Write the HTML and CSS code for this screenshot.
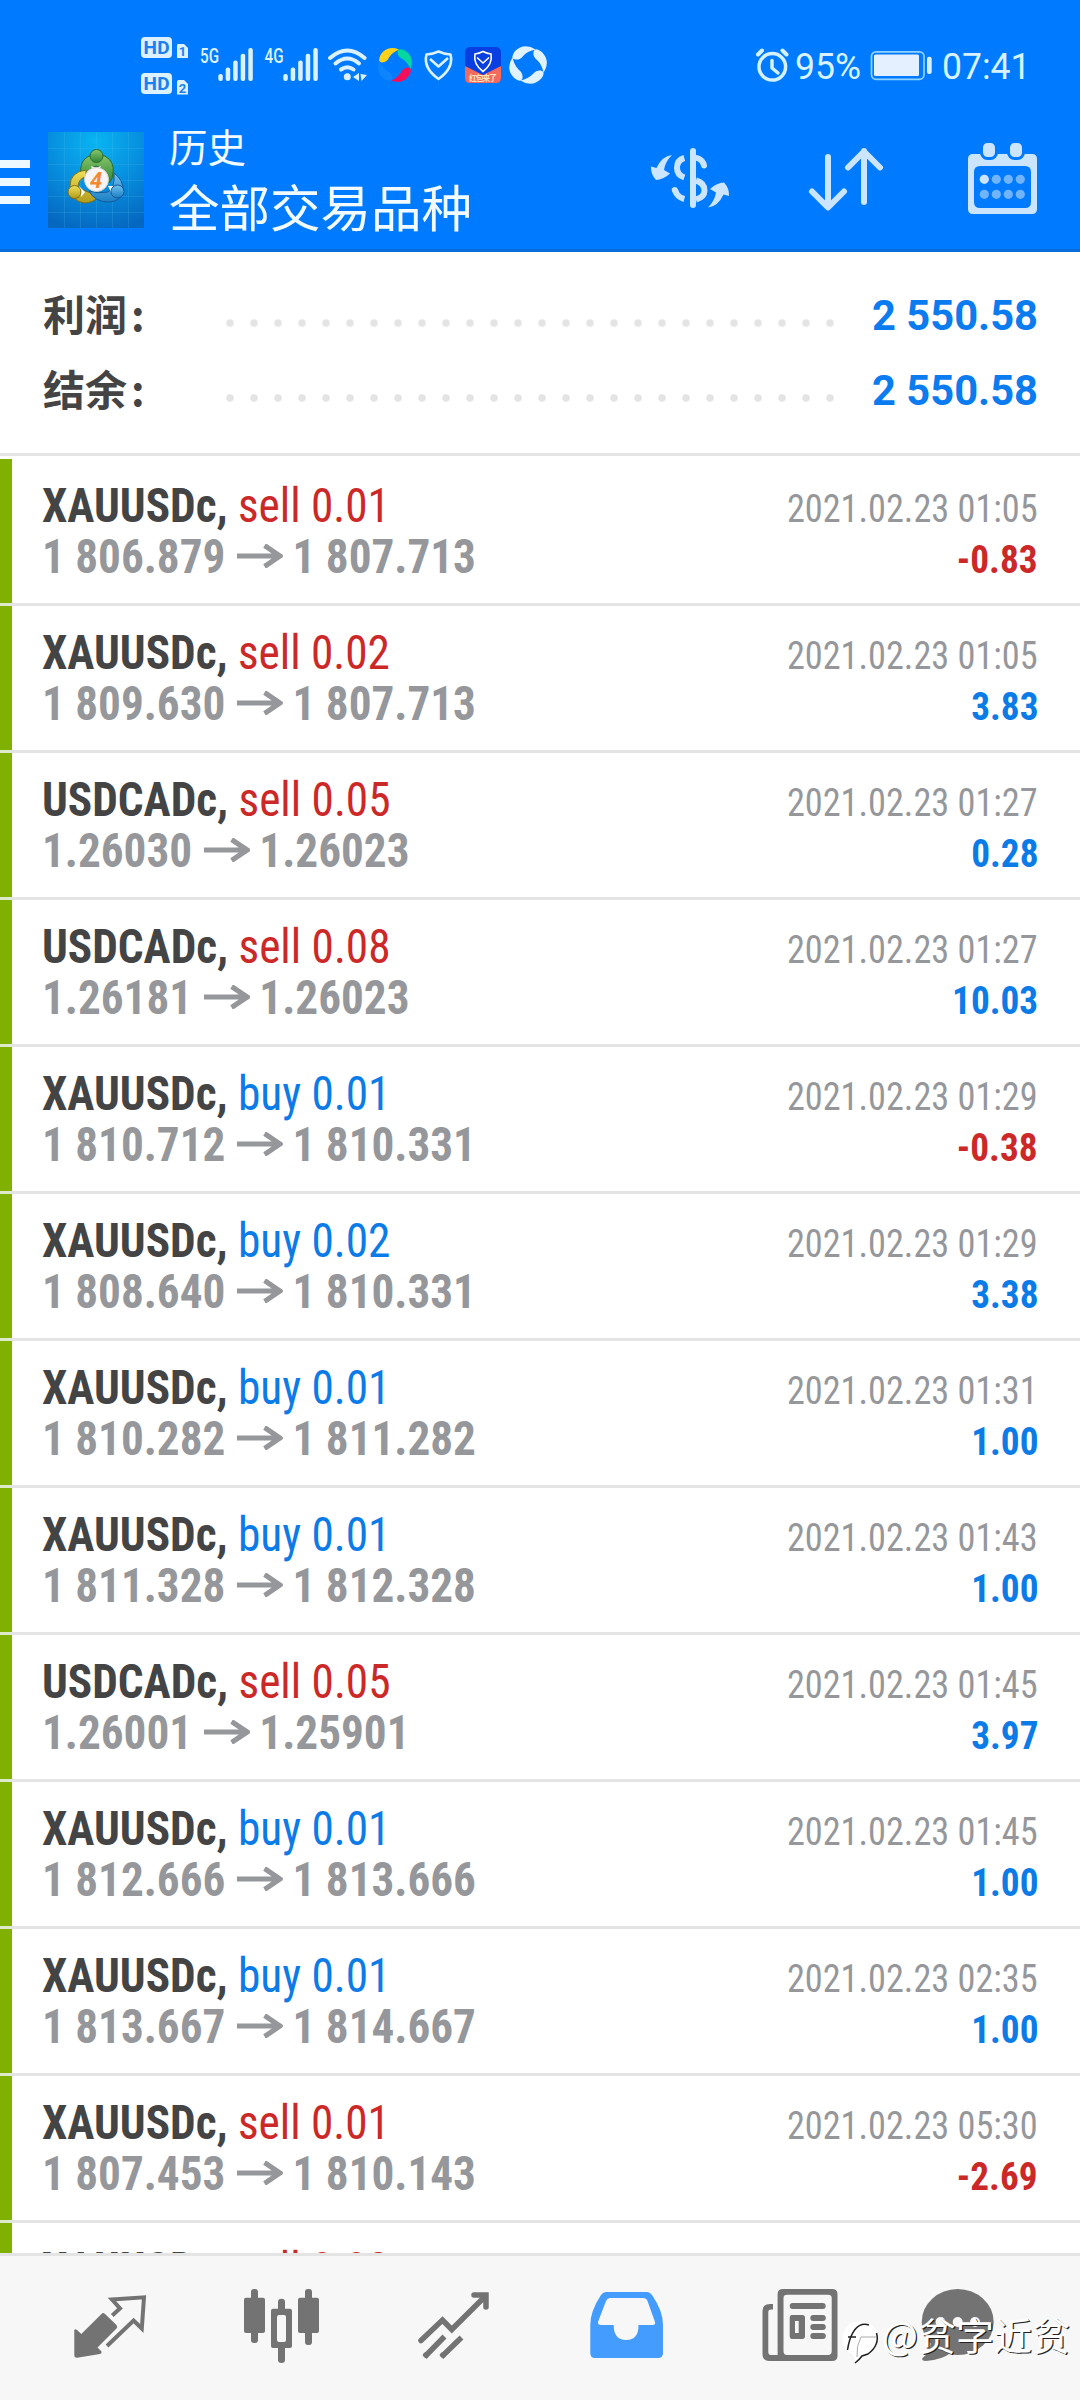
FILE: index.html
```html
<!DOCTYPE html>
<html lang="zh-CN">
<head>
<meta charset="utf-8">
<title>历史</title>
<link rel="stylesheet" href="styles.css">
</head>
<body>
<svg class="defs" width="0" height="0">
  <symbol id="arrow" viewBox="0 0 49 24" preserveAspectRatio="none"><path d="M0 12H46M29.500 1.500L46 12L29.500 22.500" fill="none" stroke="#95979b" stroke-width="5.200"/></symbol>
</svg>
<header class="header">
  <div class="status">
    <svg class="status-left" viewBox="120 20 440 90" width="440" height="90">
      <defs><path id="blade" d="M4-15.500Q-8-20-14.500-10Q-18-2.500-12.500-2.500Q-8-3-6-7.500Q-3-12.500 4-15.500z"/></defs>
      <g fill="#dcf1ff">
        <rect x="141" y="37" width="31" height="21" rx="4"/>
        <rect x="141" y="73" width="31" height="21" rx="4"/>
        <path d="M178 44h6l4 4v10h-11v-13zM178 80h6l4 4v10.500h-11v-13z"/>
        <rect x="218.300" y="74" width="4.500" height="7" rx="2"/>
        <rect x="225.700" y="67.500" width="4.500" height="13.500" rx="2"/>
        <rect x="233.200" y="60.500" width="4.500" height="20.500" rx="2"/>
        <rect x="240.700" y="53.700" width="4.500" height="27.300" rx="2"/>
        <rect x="248.300" y="48" width="4.500" height="33" rx="2"/>
        <rect x="283.300" y="74" width="4.500" height="7" rx="2"/>
        <rect x="290.700" y="67.500" width="4.500" height="13.500" rx="2"/>
        <rect x="298.200" y="60.500" width="4.500" height="20.500" rx="2"/>
        <rect x="305.700" y="53.700" width="4.500" height="27.300" rx="2"/>
        <rect x="313.300" y="48" width="4.500" height="33" rx="2"/>
        <circle cx="347.300" cy="76.700" r="3.500"/>
        <path d="M359 73v8l-6-4zM360.500 74l6.500 1-5.500 6z"/>
      </g>
      <g class="hd"><text x="143.500" y="54" textLength="26">HD</text><text x="143.500" y="90" textLength="26">HD</text></g>
      <g class="sim"><text x="182.500" y="56">1</text><text x="182.500" y="92.500">2</text></g>
      <g class="net"><text x="200" y="62.700" textLength="19" lengthAdjust="spacingAndGlyphs">5G</text><text x="264.500" y="62.700" textLength="19" lengthAdjust="spacingAndGlyphs">4G</text></g>
      <g fill="none" stroke="#dcf1ff" stroke-width="4" stroke-linecap="round">
        <path d="M330 58Q347.300 43 364.600 58M335.500 63.500Q347.300 53.500 359 63.500M341 69.500Q347.300 65 353.500 69.500"/>
      </g>
      <use href="#blade" transform="translate(395 65)" fill="#ffd21a"/>
      <use href="#blade" transform="translate(395 65) rotate(90)" fill="#06d6a0"/>
      <use href="#blade" transform="translate(395 65) rotate(180)" fill="#f50e5a"/>
      <use href="#blade" transform="translate(395 65) rotate(270)" fill="#0f84ff"/>
      <path d="M438.500 51.500Q444 54 450.500 54.500Q454 68 438.500 79Q423 68 426.500 54.500Q433 54 438.500 51.500zM430 59L438.500 66.500L448 58" fill="none" stroke="#dcf1ff" stroke-width="2.600" stroke-linejoin="round"/>
      <rect x="465" y="47" width="36" height="36" rx="5" fill="#073fe0"/>
      <path d="M465 66L483 75L501 66V78Q501 83 496 83H470Q465 83 465 78z" fill="#f36a5d"/>
      <path d="M483 51.500Q487 53.500 491 54Q493 64 483 71.500Q473 64 475 54Q479 53.500 483 51.500zM477 57.500L483 63L489 57.500" fill="none" stroke="#fff" stroke-width="1.600"/>
      <text class="badge" x="483" y="81" textLength="28">红包来了</text>
      <g fill="#e1f2ff" transform="translate(528 65) rotate(12) scale(1.080)">
        <use href="#blade"/><use href="#blade" transform="rotate(90)"/><use href="#blade" transform="rotate(180)"/><use href="#blade" transform="rotate(270)"/>
      </g>
    </svg>
    <svg class="status-right" viewBox="740 20 300 90" width="300" height="90">
      <g fill="none" stroke="#d4f1ff" stroke-linecap="round" stroke-linejoin="round">
        <circle cx="772.300" cy="66.800" r="13.300" stroke-width="3.500"/>
        <path d="M758 54.500l4-4M786.500 54.500l-4-4" stroke-width="4"/>
        <path d="M772 60.500v7.500l6 5" stroke-width="3.500"/>
        <rect x="871.500" y="51.800" width="52.500" height="27.500" rx="4.500" stroke-width="1.700" stroke="#8fd2ff"/>
      </g>
      <rect x="874" y="54.500" width="45" height="21.500" rx="1.500" fill="#e4f0ff"/>
      <rect x="927" y="56.700" width="4.700" height="17.300" rx="2" fill="#d4f1ff"/>
      <g class="clock"><text x="795" y="79.300" textLength="66" lengthAdjust="spacingAndGlyphs">95%</text><text x="942" y="79.300" textLength="88.500" lengthAdjust="spacingAndGlyphs">07:41</text></g>
    </svg>
  </div>
  <div class="toolbar">
    <div class="menu"><i></i><i></i><i></i></div>
    <svg class="logo" viewBox="0 0 96 96" width="96" height="96">
      <defs>
        <radialGradient id="sky" cx=".5" cy=".1" r=".95"><stop offset="0" stop-color="#08b5f2"/><stop offset=".5" stop-color="#078fdf"/><stop offset="1" stop-color="#0567bf"/></radialGradient>
        <linearGradient id="g" x2="0" y2="1"><stop offset="0" stop-color="#8bc76a"/><stop offset="1" stop-color="#2c8438"/></linearGradient>
        <linearGradient id="y" x2="0" y2="1"><stop offset="0" stop-color="#efe05a"/><stop offset="1" stop-color="#b39a1c"/></linearGradient>
        <linearGradient id="b" x2="0" y2="1"><stop offset="0" stop-color="#6fc0ee"/><stop offset="1" stop-color="#1b7fc4"/></linearGradient>
      </defs>
      <rect width="96" height="96" fill="url(#sky)"/>
      <path d="M16.500 0V96M32.500 0V96M48.500 0V96M64.500 0V96M80.500 0V96M0 16.500H96M0 32.500H96M0 48.500H96M0 64.500H96M0 80.500H96" stroke="#5cc8f5" stroke-opacity=".18"/>
      <path d="M33 42Q31 29 41 24Q48 21 57 24Q67 30 65 41Q65 47 61 51L57 44Q57 36 48 34Q42 36 40 44z" fill="url(#g)" stroke="#2a6a2c"/>
      <path d="M38 38Q22 40 22 54Q23 69 36 71Q46 71 51 64L40 60Q32 58 30 54Q31 46 38 45z" fill="url(#y)" stroke="#7d6f16"/>
      <path d="M60 60Q67 56 66 41Q76 48 75 60Q72 70 60 70Q47 70 41 59Q50 62 60 60z" fill="url(#b)" stroke="#15599a"/>
      <path d="M43 34l5 2 5-2-2 5h-6zM31 54l6 6-4 5zM60 54h6l-2 8z" fill="#fff"/>
      <circle cx="48.500" cy="24" r="6.500" fill="url(#g)" stroke="#2a6a2c"/>
      <circle cx="26.500" cy="60" r="6.500" fill="url(#y)" stroke="#7d6f16"/>
      <circle cx="69.500" cy="59.500" r="6.500" fill="url(#b)" stroke="#15599a"/>
      <circle cx="48.500" cy="47.500" r="12" fill="#f6f4f4" stroke="#d5d0cc"/>
      <text class="four" x="48" y="55.500">4</text>
    </svg>
    <div class="titles"><h2>历史</h2><h1>全部交易品种</h1></div>
    <svg class="actions" viewBox="640 132 410 96" width="410" height="96">
      <g fill="none" stroke="#cce5ff" stroke-width="6" stroke-linecap="round" stroke-linejoin="round">
        <path d="M693 151V205M828 157V207M812 191.500L828 207.500L844 191.500M864 202V151M848 167.500L864 151.500L880 167.500"/>
        <path d="M697 158Q703 160 704 165.500M674.800 190l.6 1.300"/>
        <path d="M684.300 158Q677 160 677 168Q677 175 684.300 177.500M696 180.500Q704.500 183 704.500 190.500Q704.500 197 696 199.500M675 190Q677 197 684.300 199" stroke-linecap="butt"/>
      </g>
      <g fill="#cce5ff">
        <path id="swap" d="M672 155Q662 156 656.500 168L651 166.500Q650.500 174 656 180Q663 180 670 173.500L664 170Q665 162 672 155z"/>
        <use href="#swap" transform="rotate(180 690 181.300)"/>
        <path fill-rule="evenodd" d="M973 154H1032Q1037 154 1037 159V209Q1037 214 1032 214H973Q968 214 968 209V159Q968 154 973 154zM980 166Q974 166 974 172V202Q974 208 980 208H1025Q1031 208 1031 202V172Q1031 166 1025 166z"/>
      </g>
      <g fill="#cce5ff" stroke="#007bff" stroke-width="3"><rect x="981.500" y="141.500" width="15" height="17" rx="6"/><rect x="1008.500" y="141.500" width="15" height="17" rx="6"/></g>
      <circle cx="984.300" cy="179.300" r="4.600" fill="#cce5ff"/>
      <g fill="#70b4ff"><circle cx="996.300" cy="179.300" r="4.600"/><circle cx="1008.300" cy="179.300" r="4.600"/><circle cx="1020.300" cy="179.300" r="4.600"/><circle cx="984.300" cy="194.300" r="4.600"/><circle cx="996.300" cy="194.300" r="4.600"/><circle cx="1008.300" cy="194.300" r="4.600"/><circle cx="1020.300" cy="194.300" r="4.600"/></g>
    </svg>
  </div>
</header>
<section class="summary">
  <div class="total"><b class="label">利润<span>:</span></b><svg class="dots" width="612" height="8"><path d="M4 4H605"/></svg><b class="sum">2 550.58</b></div>
  <div class="total"><b class="label">结余<span>:</span></b><svg class="dots" width="612" height="8"><path d="M4 4H605"/></svg><b class="sum">2 550.58</b></div>
</section>
<ul class="deals">
  <li><p><span class="name"><b>XAUUSDc,</b> <i class="sell">sell 0.01</i></span><time>2021.02.23 01:05</time></p><p><b class="price">1 806.879<svg><use href="#arrow"/></svg>1 807.713</b><b class="profit sell">-0.83</b></p></li>
  <li><p><span class="name"><b>XAUUSDc,</b> <i class="sell">sell 0.02</i></span><time>2021.02.23 01:05</time></p><p><b class="price">1 809.630<svg><use href="#arrow"/></svg>1 807.713</b><b class="profit buy">3.83</b></p></li>
  <li><p><span class="name"><b>USDCADc,</b> <i class="sell">sell 0.05</i></span><time>2021.02.23 01:27</time></p><p><b class="price">1.26030<svg><use href="#arrow"/></svg>1.26023</b><b class="profit buy">0.28</b></p></li>
  <li><p><span class="name"><b>USDCADc,</b> <i class="sell">sell 0.08</i></span><time>2021.02.23 01:27</time></p><p><b class="price">1.26181<svg><use href="#arrow"/></svg>1.26023</b><b class="profit buy">10.03</b></p></li>
  <li><p><span class="name"><b>XAUUSDc,</b> <i class="buy">buy 0.01</i></span><time>2021.02.23 01:29</time></p><p><b class="price">1 810.712<svg><use href="#arrow"/></svg>1 810.331</b><b class="profit sell">-0.38</b></p></li>
  <li><p><span class="name"><b>XAUUSDc,</b> <i class="buy">buy 0.02</i></span><time>2021.02.23 01:29</time></p><p><b class="price">1 808.640<svg><use href="#arrow"/></svg>1 810.331</b><b class="profit buy">3.38</b></p></li>
  <li><p><span class="name"><b>XAUUSDc,</b> <i class="buy">buy 0.01</i></span><time>2021.02.23 01:31</time></p><p><b class="price">1 810.282<svg><use href="#arrow"/></svg>1 811.282</b><b class="profit buy">1.00</b></p></li>
  <li><p><span class="name"><b>XAUUSDc,</b> <i class="buy">buy 0.01</i></span><time>2021.02.23 01:43</time></p><p><b class="price">1 811.328<svg><use href="#arrow"/></svg>1 812.328</b><b class="profit buy">1.00</b></p></li>
  <li><p><span class="name"><b>USDCADc,</b> <i class="sell">sell 0.05</i></span><time>2021.02.23 01:45</time></p><p><b class="price">1.26001<svg><use href="#arrow"/></svg>1.25901</b><b class="profit buy">3.97</b></p></li>
  <li><p><span class="name"><b>XAUUSDc,</b> <i class="buy">buy 0.01</i></span><time>2021.02.23 01:45</time></p><p><b class="price">1 812.666<svg><use href="#arrow"/></svg>1 813.666</b><b class="profit buy">1.00</b></p></li>
  <li><p><span class="name"><b>XAUUSDc,</b> <i class="buy">buy 0.01</i></span><time>2021.02.23 02:35</time></p><p><b class="price">1 813.667<svg><use href="#arrow"/></svg>1 814.667</b><b class="profit buy">1.00</b></p></li>
  <li><p><span class="name"><b>XAUUSDc,</b> <i class="sell">sell 0.01</i></span><time>2021.02.23 05:30</time></p><p><b class="price">1 807.453<svg><use href="#arrow"/></svg>1 810.143</b><b class="profit sell">-2.69</b></p></li>
  <li><p><span class="name"><b>XAUUSDc,</b> <i class="sell">sell 0.02</i></span></p></li>
</ul>
<nav class="tabs">
  <svg viewBox="24 2256 172 144"><path fill="#737373" d="M101.500 2314Q103 2312 105 2314L116.500 2325Q118 2327 116.500 2328.500L97.500 2347.500L101.500 2351.500Q102 2353.500 100 2354L77 2357.800Q74.300 2357.800 74.300 2355V2330Q75 2328.500 77 2330L81.300 2334z"/><path fill="none" stroke="#737373" stroke-width="4" d="M112.300 2315.500L120 2308.300L112 2299.500L144 2297.300L141.800 2328.500L133.600 2320.500L107 2346"/></svg>
  <svg viewBox="196 2256 172 144" fill="#737373"><rect x="244" y="2297.700" width="21" height="35.300" rx="2"/><rect x="251" y="2289" width="7" height="54" rx="3"/><path fill-rule="evenodd" d="M273 2308.700H278V2302Q278 2298.700 281.500 2298.700T285 2302V2308.700H290Q292 2308.700 292 2311V2346Q292 2348 290 2348H285V2360Q285 2363 281.500 2363T278 2360V2348H273Q271 2348 271 2346V2311Q271 2308.700 273 2308.700zM279 2315Q277 2315 277 2317V2340Q277 2342 279 2342H284Q286 2342 286 2340V2317Q286 2315 284 2315z"/><rect x="298" y="2297.700" width="21" height="35.300" rx="2"/><rect x="305" y="2289" width="7" height="56" rx="3"/></svg>
  <svg viewBox="368 2256 172 144" fill="none" stroke="#737373" stroke-width="5.500"><path stroke-linecap="round" stroke-linejoin="miter" d="M421 2340.500L442.500 2320L451.800 2329.500L485 2296.500M474 2295H486V2307"/><path d="M424.500 2357L444.500 2336.500M441.300 2357L461.500 2337.500"/><g stroke="none" fill="#737373"><circle cx="426" cy="2355" r="2.800"/><circle cx="443" cy="2355" r="2.800"/></g></svg>
  <svg viewBox="540 2256 172 144"><path fill="#449cff" fill-rule="evenodd" d="M606 2292H647Q650 2292 652 2295Q663 2311 663 2325V2353Q663 2358 658 2358H595Q590.300 2358 590.300 2353V2325Q590.300 2311 601 2295Q603 2292 606 2292zM610 2298Q607.500 2298 606 2301L598 2322Q597.500 2325 601 2325H613.700Q613.700 2340 626.200 2340T638.500 2325H652.500Q656 2325 655 2322L647.500 2301Q646.500 2298 643 2298z"/></svg>
  <svg viewBox="712 2256 172 144" fill="#737373"><path fill-rule="evenodd" d="M783 2289H832Q837.500 2289 837.500 2294V2356Q837.500 2361 832 2361H769Q762.500 2361 762.500 2354V2311Q762.500 2304 770 2304H773V2309.500H771Q768.300 2309.500 768.300 2312V2352Q768.300 2355 771 2355H777.600V2294Q777.600 2289 783 2289zM787 2294.700Q783.500 2294.700 783.500 2298V2351Q783.500 2355 787 2355H828Q831.700 2355 831.700 2351V2298Q831.700 2294.700 828 2294.700z"/><rect x="789.700" y="2303" width="36" height="6" rx="3"/><path fill-rule="evenodd" d="M792 2315H802.500Q805 2315 805 2318V2336Q805 2339 802.500 2339H792Q789.700 2339 789.700 2336V2318Q789.700 2315 792 2315zM795 2321V2333H798.700V2321z"/><rect x="810.300" y="2315" width="15.500" height="6" rx="3"/><rect x="810.300" y="2324" width="15.500" height="6" rx="3"/><rect x="810.300" y="2333" width="15.500" height="6" rx="3"/></svg>
  <svg viewBox="884 2256 172 144" fill="#737373"><ellipse cx="957.700" cy="2322" rx="36" ry="33"/><path d="M931 2341Q930 2353 922.500 2358Q921 2361 926 2361Q942 2360 952 2352z"/><g fill="#f7f7f7"><circle cx="940.500" cy="2322" r="5"/><circle cx="957.700" cy="2322" r="5"/><circle cx="975" cy="2322" r="5"/></g></svg>
  <div class="watermark">
    <svg viewBox="840 2316 42 50" width="42" height="50"><path d="M852 2323Q869 2318 876.500 2331Q880 2346 866 2354L860 2358L856 2363L853 2355Q842 2350 842.500 2338Q844 2326 852 2323z" fill="#fff"/><path d="M847.500 2350Q851 2328 862 2324.500Q866 2324 869 2325M848 2337H856M876.500 2333Q880 2345 868 2354L862 2356Q860 2359 855 2363" fill="none" stroke="#222" stroke-width="1.500"/><path d="M857 2357Q856 2346 861 2337H876" fill="none" stroke="#aaa"/></svg>
    <span>@贫字近贫</span>
  </div>
</nav>
</body>
</html>
```
FILE: styles.css
```css
* { box-sizing: border-box; margin: 0; padding: 0; }
body { width: 1080px; height: 2400px; display: flex; flex-direction: column; overflow: hidden; background: #fff; font-family: "Roboto Condensed", Roboto, "Noto Sans CJK SC", sans-serif; font-stretch: 75%; }
i { font-style: normal; }
.defs { position: absolute; }

.header { height: 252px; background: #007bff; border-bottom: 3px solid #066bdc; display: flex; flex-direction: column; }
.status { display: flex; justify-content: space-between; height: 110px; padding: 20px 40px 0 120px; }
.hd text { font: 700 19px Roboto, sans-serif; fill: #1b80ee; }
.sim text { font: 700 13px Roboto, sans-serif; fill: #1b80ee; text-anchor: middle; }
.net text { font: 500 20px Roboto, sans-serif; fill: #dcf1ff; }
.clock text { font: 400 37px Roboto, sans-serif; fill: #d8f3ff; }
.badge { font: 700 8px "Noto Sans CJK SC", sans-serif; fill: #ffe3c0; text-anchor: middle; }
.toolbar { display: flex; align-items: flex-start; padding-top: 22px; }
.menu { width: 48px; padding-top: 28px; display: flex; flex-direction: column; gap: 10px; }
.menu i { width: 30px; height: 8px; background: #eef9ff; }
.four { font: italic 700 22px Roboto, sans-serif; fill: #f28a35; text-anchor: middle; }
.titles { width: 496px; padding-left: 25px; color: #f2fbff; font-family: "Noto Sans CJK SC", sans-serif; }
.titles h2 { font-size: 38.500px; font-weight: 400; line-height: 50px; margin-top: -12px; }
.titles h1 { font-size: 50.500px; font-weight: 400; line-height: 66px; margin-top: 2px; }

.summary { height: 204px; padding: 24px 42px 0 43px; border-bottom: 3px solid #e4e4e4; }
.total { height: 75px; display: flex; align-items: center; }
.label { width: 183px; color: #444; font: 700 42px/75px "Noto Sans CJK SC", sans-serif; margin-top: -2px; }
.label span { margin-left: 4px; }
.dots { margin-top: 19px; }
.dots path { fill: none; stroke: #e4e4e4; stroke-width: 7.6px; stroke-linecap: round; stroke-dasharray: 0 24; }
.sum { margin: 4px 0 0 auto; color: #0b7bf0; font: 700 41.700px/75px Roboto, sans-serif; }

.deals { flex: 1; min-height: 0; overflow: hidden; list-style: none; padding-top: 3px; }
.deals li { height: 147px; padding: 21px 42px 0 42px; border-bottom: 3px solid; border-image: linear-gradient(to right, #dcebc5 12px, #e4e4e4 12px) 3; background: linear-gradient(#80b000, #80b000) 0 0 / 12px 144px no-repeat; }
.deals p { height: 51px; line-height: 51px; font-size: 48px; display: flex; justify-content: space-between; align-items: baseline; white-space: pre; }
.name { transform: scaleX(.943); transform-origin: 0 0; }
.name b { color: #444; }
.price { color: #95979b; transform: scaleX(.941); transform-origin: 0 0; }
.price svg { width: 49px; height: 24px; margin: 0 10px 0 12.500px; vertical-align: 5px; }
.deals time { color: #95979b; font-size: 39px; line-height: 30px; transform: scaleX(.930); transform-origin: 100% 0; }
.profit { font-size: 39px; line-height: 30px; transform: scaleX(.955); transform-origin: 100% 0; }
.sell { color: #cc2828; }
.buy { color: #0b7be8; }

.tabs { position: relative; height: 147px; padding: 0 24px; display: flex; background: #f7f7f7; border-top: 3px solid #e4e4e4; }
.tabs > svg { width: 172px; height: 144px; }
.watermark { position: absolute; left: 840px; top: 60px; display: flex; }
.watermark span { font: 400 38px/50px "Noto Sans CJK SC", sans-serif; color: #fff; text-shadow: 1.300px 1.300px 0 #222; margin-top: -7px; white-space: nowrap; }
```
